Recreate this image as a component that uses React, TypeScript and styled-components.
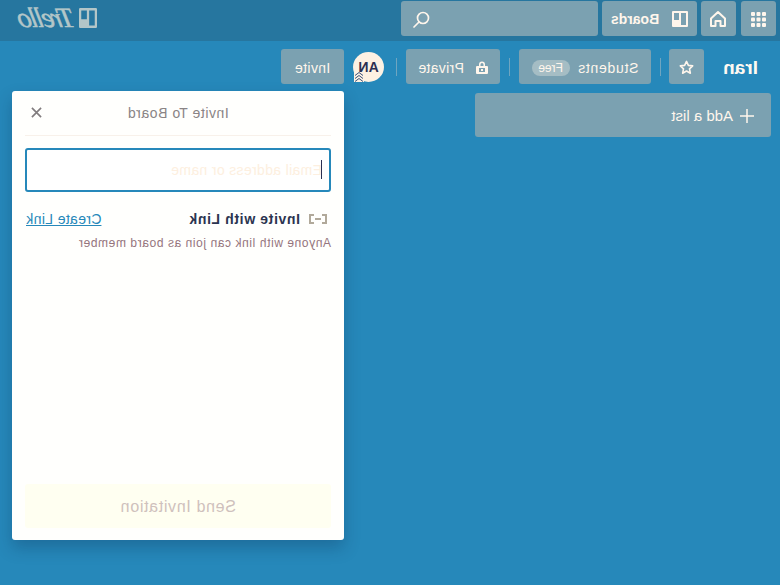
import React from "react";
import styled, { createGlobalStyle } from "styled-components";

const GlobalStyle = createGlobalStyle`
  html, body {
    margin: 0;
    padding: 0;
    background: #2688ba;
    overflow: hidden;
  }
  * {
    box-sizing: border-box;
  }
`;

// the whole page is flipped in the reference
const Page = styled.div`
  position: relative;
  width: 780px;
  height: 585px;
  overflow: hidden;
  background: #2688ba;
  color: #fff6ec;
  font-family: "Liberation Sans", Arial, sans-serif;
  font-size: 14px;
  transform: scaleX(-1);
`;

const Header = styled.header`
  display: flex;
  align-items: flex-start;
  gap: 4px;
  height: 41px;
  padding: 1px 19px 0 4px;
  background: #26769f;
`;

const HeaderButton = styled.div<{ $width: number }>`
  display: flex;
  align-items: center;
  justify-content: center;
  gap: 13px;
  width: ${(p) => p.$width}px;
  height: 35px;
  padding-top: 1px;
  border-radius: 3px;
  background: #7ba1b1;
  font-weight: bold;
`;

const AppsButton = styled(HeaderButton)`
  margin-right: 1px;
`;

const SearchBox = styled(HeaderButton)`
  justify-content: flex-start;
  padding-left: 168px;
`;

const Logo = styled.div`
  display: flex;
  align-items: center;
  gap: 5px;
  height: 20px;
  margin: 7px 0 0 auto;
  color: #b3c6c8;
`;

const LogoText = styled.span`
  display: inline-block;
  font-family: "Liberation Serif", serif;
  font-style: italic;
  font-size: 28px;
  line-height: 20px;
  letter-spacing: -1.8px;
  -webkit-text-stroke: 0.5px #b3c6c8;
  transform: skewX(-12deg);
`;

const BoardBar = styled.div`
  display: flex;
  align-items: center;
  height: 35px;
  margin-top: 8px;
  padding-left: 22px;
`;

const BoardName = styled.h1`
  width: 36px;
  margin: 0 18px 0 0;
  padding-top: 3px;
  font-size: 19px;
  font-weight: bold;
  color: #fff9f2;
`;

const BarButton = styled.div<{ $width: number; $gap?: number }>`
  display: flex;
  align-items: center;
  justify-content: center;
  gap: ${(p) => p.$gap ?? 8}px;
  width: ${(p) => p.$width}px;
  height: 35px;
  padding-top: 2px;
  border-radius: 3px;
  background: #7ba1b1;
  letter-spacing: 0.35px;
`;

const StarButton = styled(BarButton)`
  margin-right: -1px;
`;

const TeamName = styled.span`
  letter-spacing: 0.7px;
`;

const Divider = styled.span`
  width: 1px;
  height: 18px;
  margin: 0 9px;
  background: #6fa5c0;
`;

const FreeTag = styled.span`
  display: flex;
  align-items: center;
  justify-content: center;
  width: 38px;
  height: 16px;
  border-radius: 8px;
  background: #a5bdc4;
  font-size: 12px;
  letter-spacing: 0;
`;

const Avatar = styled.div`
  position: relative;
  display: flex;
  align-items: center;
  justify-content: center;
  width: 31px;
  height: 30px;
  margin: 0 9px 0 3px;
  border-radius: 50%;
  background: #fdf1e3;
  color: #2b2f52;
  font-size: 14px;
  font-weight: bold;
`;

const AvatarBadge = styled.span`
  position: absolute;
  right: 1px;
  bottom: 0;
  display: flex;
  width: 10px;
  height: 10px;
  background: #fdf1e3;
  color: #3b4f78;
`;

const ListArea = styled.div`
  padding: 9px 9px 0;
`;

const AddList = styled.div`
  display: flex;
  align-items: center;
  gap: 6px;
  width: 296px;
  height: 44px;
  padding: 1px 0 0 16px;
  border-radius: 3px;
  background: #7ba1b1;
  font-size: 15px;
`;

const Modal = styled.section`
  position: absolute;
  top: 91px;
  left: 436px;
  display: flex;
  flex-direction: column;
  width: 332px;
  height: 449px;
  padding: 0 13px 12px;
  border-radius: 3px;
  background: #fffffd;
  box-shadow: 0 8px 16px rgba(9, 30, 66, 0.25);
`;

const ModalHeader = styled.div`
  position: relative;
  display: flex;
  align-items: center;
  justify-content: center;
  height: 45px;
  border-bottom: 1px solid #f8f1ea;
  color: #8a8486;
  letter-spacing: 0.55px;
`;

const CloseIcon = styled.svg`
  position: absolute;
  right: 6px;
  top: 16px;
  color: #817c7e;
`;

const FieldWrap = styled.div`
  position: relative;
  margin-top: 12px;
`;

const Field = styled.input`
  display: block;
  width: 100%;
  height: 44px;
  padding: 0 7px;
  border: 2px solid #2688ba;
  border-radius: 3px;
  background: #fff;
  outline: none;
  font: 14px "Liberation Sans", Arial, sans-serif;
  letter-spacing: 0.34px;
  &::placeholder {
    color: #fdefe0;
    opacity: 1;
  }
`;

const Caret = styled.span`
  position: absolute;
  left: 9px;
  top: 12px;
  width: 1px;
  height: 19px;
  background: #2b2f52;
`;

const LinkRow = styled.div`
  display: flex;
  align-items: center;
  height: 18px;
  margin-top: 18px;
  padding-left: 4px;
`;

const LinkTitle = styled.span`
  margin-left: 9px;
  font-weight: bold;
  color: #2b3450;
  letter-spacing: 0.63px;
`;

const CreateLink = styled.a`
  margin: 0 1px 0 auto;
  color: #2688ba;
  text-decoration: underline;
  letter-spacing: 0.35px;
`;

const Hint = styled.p`
  margin: 8px 0 0;
  font-size: 12px;
  line-height: 14px;
  color: #95757d;
  letter-spacing: 0.58px;
`;

const SendButton = styled.div`
  display: flex;
  align-items: center;
  justify-content: center;
  height: 44px;
  margin-top: auto;
  padding-top: 2px;
  border-radius: 3px;
  background: #fffff1;
  color: #cfc1bd;
  font-size: 16px;
  letter-spacing: 0.67px;
`;

function BoardIcon({ width, height }: { width: number; height: number }) {
  return (
    <svg width={width} height={height} viewBox="0 0 16 16" preserveAspectRatio="none" fill="currentColor">
      <path d="M1 0h14a1 1 0 0 1 1 1v14a1 1 0 0 1-1 1H1a1 1 0 0 1-1-1V1a1 1 0 0 1 1-1zM2 2v12h5V2zm7 0v7h5V2z" fillRule="evenodd" />
    </svg>
  );
}

export default function App() {
  return (
    <Page>
      <GlobalStyle />
      <Header>
        <AppsButton $width={35}>
          <svg width="15" height="15" viewBox="0 0 15 15" fill="currentColor">
            {[0, 5.5, 11].map((x) =>
              [0, 5.5, 11].map((y) => (
                <rect key={`${x}-${y}`} x={x} y={y} width="4" height="4" rx="1" />
              ))
            )}
          </svg>
        </AppsButton>
        <HeaderButton $width={35}>
          <svg width="18" height="18" viewBox="0 0 18 18" fill="none" stroke="currentColor" strokeWidth="2" strokeLinejoin="round">
            <path d="M2 8.5 9 2l7 6.5V16h-4.500v-5h-5v5H2z" />
          </svg>
        </HeaderButton>
        <HeaderButton $width={95}>
          <BoardIcon width={16} height={16} />
          <span>Boards</span>
        </HeaderButton>
        <SearchBox $width={197}>
          <svg width="17" height="17" viewBox="0 0 17 17" fill="none" stroke="currentColor" strokeWidth="1.7">
            <circle cx="7" cy="7" r="5.5" />
            <path d="m11 11 5 5" strokeLinecap="round" />
          </svg>
        </SearchBox>
        <Logo>
          <BoardIcon width={18} height={20} />
          <LogoText>Trello</LogoText>
        </Logo>
      </Header>

      <BoardBar>
        <BoardName>Iran</BoardName>
        <StarButton $width={35}>
          <svg width="15" height="15" viewBox="0 0 16 16" fill="none" stroke="currentColor" strokeWidth="1.7" strokeLinejoin="round">
            <path d="m8 1.500 2 4.200 4.600.6-3.400 3.200.9 4.600L8 11.800l-4.100 2.300.9-4.600L1.400 6.300 6 5.700z" />
          </svg>
        </StarButton>
        <Divider />
        <BarButton $width={132}>
          <TeamName>Students</TeamName>
          <FreeTag>Free</FreeTag>
        </BarButton>
        <Divider />
        <BarButton $width={94} $gap={12}>
          <svg width="12" height="13" viewBox="0 0 12 13" fill="currentColor">
            <path fillRule="evenodd" d="M3 5V3.500a3 3 0 0 1 6 0V5h2a1 1 0 0 1 1 1v6a1 1 0 0 1-1 1H1a1 1 0 0 1-1-1V6a1 1 0 0 1 1-1zm1.500 0h3V3.500a1.500 1.500 0 0 0-3 0zM3 7v4h6V7zm2 1h2v2H5z" />
          </svg>
          <span>Private</span>
        </BarButton>
        <Divider />
        <Avatar>
          AN
          <AvatarBadge>
            <svg width="10" height="10" viewBox="0 0 10 10" fill="none" stroke="currentColor" strokeWidth="1">
              <path d="m1 3.500 4-3 4 3M1 6.500l4-3 4 3M1 9.500l4-3 4 3" />
            </svg>
          </AvatarBadge>
        </Avatar>
        <BarButton $width={63}>Invite</BarButton>
      </BoardBar>

      <ListArea>
        <AddList>
          <svg width="16" height="16" viewBox="0 0 16 16" stroke="currentColor" strokeWidth="1.5">
            <path d="M8 1v14M1 8h14" />
          </svg>
          <span>Add a list</span>
        </AddList>
      </ListArea>

      <Modal>
        <ModalHeader>
          Invite To Board
          <CloseIcon width="11" height="11" viewBox="0 0 12 12" stroke="currentColor" strokeWidth="1.8">
            <path d="m1 1 10 10M11 1 1 11" />
          </CloseIcon>
        </ModalHeader>
        <FieldWrap>
          <Field placeholder="Email address or name" readOnly />
          <Caret />
        </FieldWrap>
        <LinkRow>
          <svg width="18" height="10" viewBox="0 0 18 10" fill="none" stroke="#b1a99a" strokeWidth="2">
            <path d="M5 1H1v8h4M13 1h4v8h-4M6 5h6" />
          </svg>
          <LinkTitle>Invite with Link</LinkTitle>
          <CreateLink>Create Link</CreateLink>
        </LinkRow>
        <Hint>Anyone with link can join as board member</Hint>
        <SendButton>Send Invitation</SendButton>
      </Modal>
    </Page>
  );
}
